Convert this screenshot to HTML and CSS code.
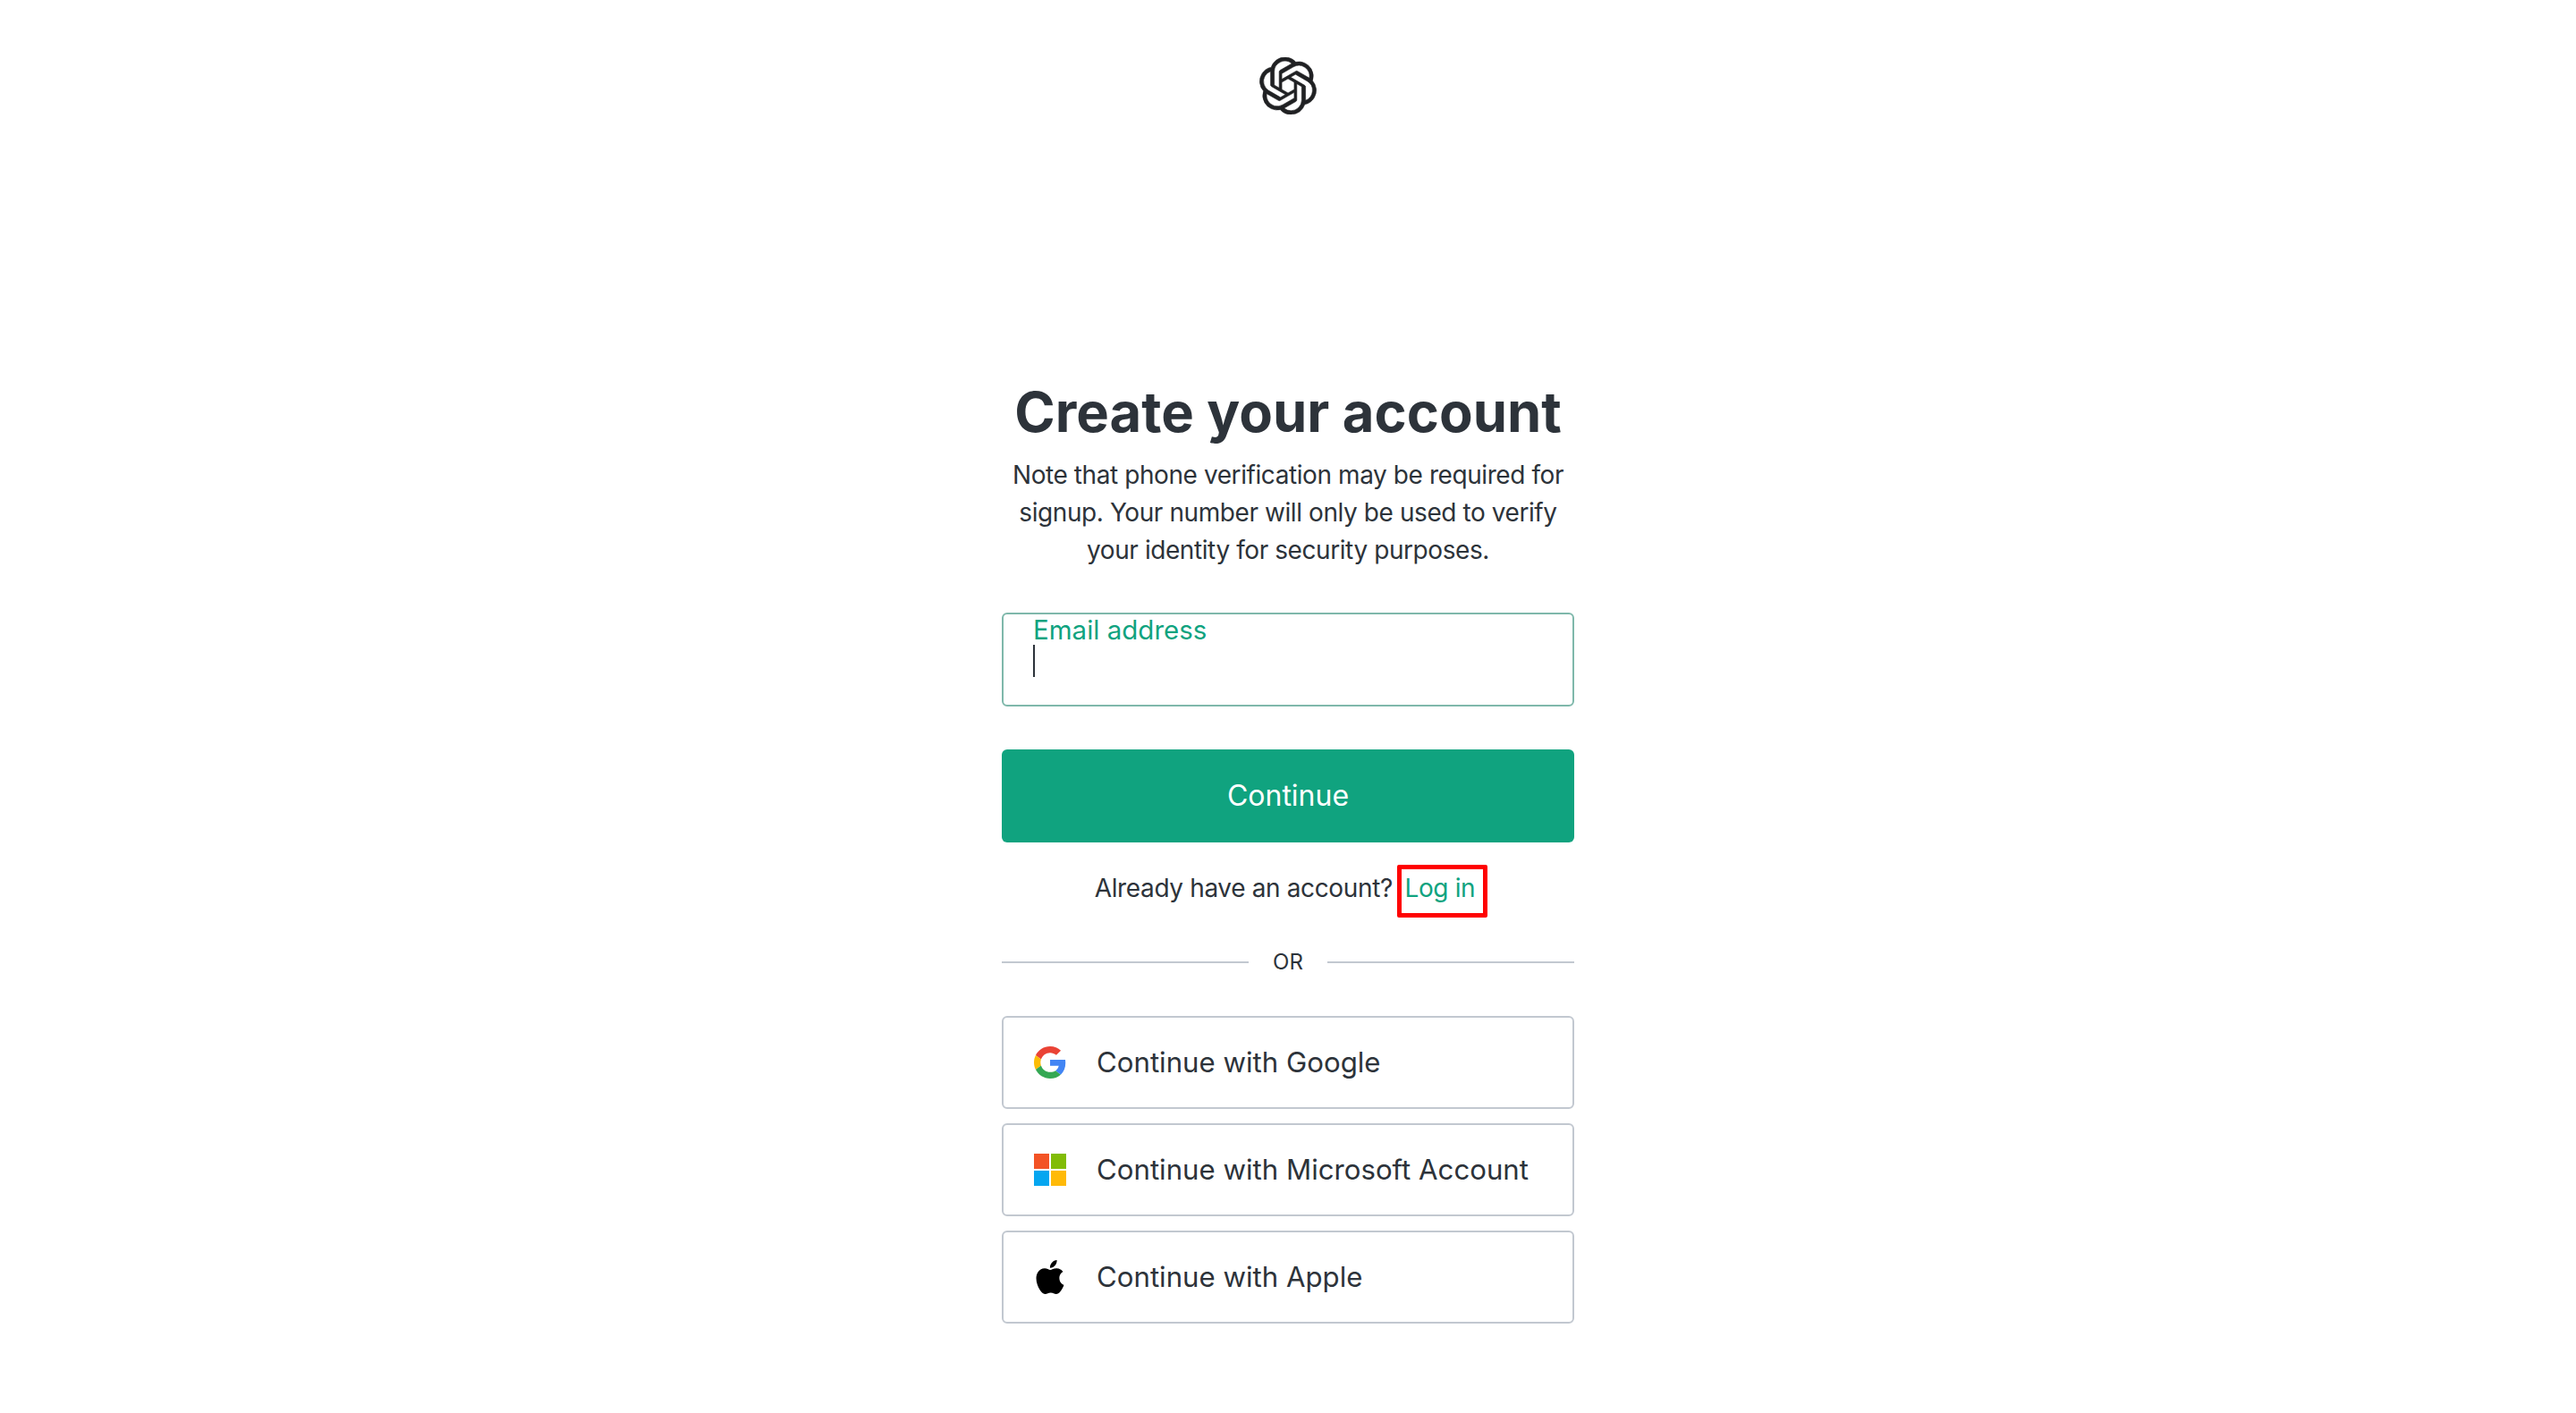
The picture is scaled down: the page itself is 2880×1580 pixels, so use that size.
FILE: index.html
```html
<!DOCTYPE html>
<html lang="en">
<head>
<meta charset="utf-8">
<title>Create your account</title>
<link rel="stylesheet" href="styles.css">
</head>
<body>
<header class="brand">
<svg class="brand-logo" viewBox="0 0 24 24" aria-hidden="true"><path d="M22.2819 9.8211a5.9847 5.9847 0 0 0-.5157-4.9108 6.0462 6.0462 0 0 0-6.5098-2.9A6.0651 6.0651 0 0 0 4.9807 4.1818a5.9847 5.9847 0 0 0-3.9977 2.9 6.0462 6.0462 0 0 0 .7427 7.0966 5.98 5.98 0 0 0 .511 4.9107 6.051 6.051 0 0 0 6.5146 2.9001A5.9847 5.9847 0 0 0 13.2599 24a6.0557 6.0557 0 0 0 5.7718-4.2058 5.9894 5.9894 0 0 0 3.9977-2.9001 6.0557 6.0557 0 0 0-.7475-7.0729zm-9.022 12.6081a4.4755 4.4755 0 0 1-2.8764-1.0408l.1419-.0804 4.7783-2.7582a.7948.7948 0 0 0 .3927-.6813v-6.7369l2.02 1.1686a.071.071 0 0 1 .038.052v5.5826a4.504 4.504 0 0 1-4.4945 4.4944zm-9.6607-4.1254a4.4708 4.4708 0 0 1-.5346-3.0137l.142.0852 4.783 2.7582a.7712.7712 0 0 0 .7806 0l5.8428-3.3685v2.3324a.0804.0804 0 0 1-.0332.0615L9.74 19.9502a4.4992 4.4992 0 0 1-6.1408-1.6464zM2.3408 7.8956a4.485 4.485 0 0 1 2.3655-1.9728V11.6a.7664.7664 0 0 0 .3879.6765l5.8144 3.3543-2.0201 1.1685a.0757.0757 0 0 1-.071 0l-4.8303-2.7865A4.504 4.504 0 0 1 2.3408 7.872zm16.5963 3.8558L13.1038 8.364 15.1192 7.2a.0757.0757 0 0 1 .071 0l4.8303 2.7913a4.4944 4.4944 0 0 1-.6765 8.1042v-5.6772a.79.79 0 0 0-.407-.667zm2.0107-3.0231l-.142-.0852-4.7735-2.7818a.7759.7759 0 0 0-.7854 0L9.409 9.2297V6.8974a.0662.0662 0 0 1 .0284-.0615l4.8303-2.7866a4.4992 4.4992 0 0 1 6.6802 4.66zM8.3065 12.863l-2.02-1.1638a.0804.0804 0 0 1-.038-.0567V6.0742a4.4992 4.4992 0 0 1 7.3757-3.4537l-.142.0805L8.704 5.459a.7948.7948 0 0 0-.3927.6813zm1.0976-2.3654l2.602-1.4998 2.6069 1.4998v2.9994l-2.5974 1.4997-2.6067-1.4997Z"/></svg>
</header>
<main class="panel">
<h1 class="title">Create your account</h1>
<p class="note">Note that phone verification may be required for signup. Your number will only be used to verify your identity for security purposes.</p>
<div class="field">
<label class="field-label">Email address</label>
<span class="caret"></span>
</div>
<button class="primary" type="button">Continue</button>
<p class="login-row">Already have an account? <a class="login-link" href="#">Log in</a></p>
<div class="divider"><span class="divider-text">OR</span></div>
<div class="socials">
<button class="social" type="button">
<svg class="social-icon" viewBox="0 0 48 48" aria-hidden="true"><path fill="#EA4335" d="M24 9.5c3.54 0 6.71 1.22 9.21 3.6l6.85-6.85C35.9 2.38 30.47 0 24 0 14.62 0 6.51 5.38 2.56 13.22l7.98 6.19C12.43 13.72 17.74 9.5 24 9.5z"/><path fill="#4285F4" d="M46.98 24.55c0-1.57-.15-3.09-.38-4.55H24v9.02h12.94c-.58 2.96-2.26 5.48-4.78 7.18l7.73 6c4.51-4.18 7.09-10.36 7.09-17.65z"/><path fill="#FBBC05" d="M10.53 28.59c-.48-1.45-.76-2.99-.76-4.59s.27-3.14.76-4.59l-7.98-6.19C.92 16.46 0 20.12 0 24c0 3.88.92 7.54 2.56 10.78l7.97-6.19z"/><path fill="#34A853" d="M24 48c6.48 0 11.93-2.13 15.89-5.81l-7.73-6c-2.15 1.45-4.92 2.3-8.16 2.3-6.26 0-11.57-4.22-13.47-9.91l-7.98 6.19C6.51 42.62 14.62 48 24 48z"/></svg>
<span>Continue with Google</span>
</button>
<button class="social" type="button">
<svg class="social-icon" viewBox="0 0 36 36" aria-hidden="true"><rect width="17" height="17" fill="#F35325"/><rect x="19" width="17" height="17" fill="#81BC06"/><rect y="19" width="17" height="17" fill="#05A6F0"/><rect x="19" y="19" width="17" height="17" fill="#FFBA08"/></svg>
<span>Continue with Microsoft Account</span>
</button>
<button class="social" type="button">
<svg class="social-icon social-icon-apple" viewBox="0 0 24 24" aria-hidden="true"><path fill="#000" d="M12.152 6.896c-.948 0-2.415-1.078-3.96-1.04-2.04.027-3.91 1.183-4.961 3.014-2.117 3.675-.546 9.103 1.519 12.09 1.013 1.454 2.208 3.09 3.792 3.039 1.52-.065 2.09-.987 3.935-.987 1.831 0 2.35.987 3.96.948 1.637-.026 2.676-1.48 3.676-2.948 1.156-1.688 1.636-3.325 1.662-3.415-.039-.013-3.182-1.221-3.22-4.857-.026-3.04 2.48-4.494 2.597-4.559-1.429-2.09-3.623-2.324-4.39-2.376-2-.156-3.675 1.09-4.61 1.09zM15.53 3.83c.843-1.012 1.4-2.427 1.245-3.83-1.207.052-2.662.805-3.532 1.818-.78.896-1.454 2.338-1.273 3.714 1.338.104 2.715-.688 3.559-1.701"/></svg>
<span>Continue with Apple</span>
</button>
</div>
</main>
</body>
</html>
```
FILE: styles.css
```css
* { box-sizing: border-box; }
html, body { margin: 0; height: 100%; }
body {
  background: #fff;
  color: #2d333a;
  font-family: Inter, "Liberation Sans", sans-serif;
  display: flex;
  flex-direction: column;
  align-items: center;
}
.brand { padding-top: 64px; height: 421px; }
.brand-logo { display: block; width: 64px; height: 64px; fill: #202123; stroke: #202123; stroke-width: 0.22; }
.panel { width: 640px; display: flex; flex-direction: column; align-items: stretch; }
.title {
  margin: 0;
  font-size: 61.5px;
  font-weight: 700;
  line-height: 80px;
  text-align: center;
  white-space: nowrap;
}
.note {
  margin: 9px -10px 0;
  font-size: 28px;
  letter-spacing: -0.42px;
  line-height: 42px;
  text-align: center;
}
.field {
  margin-top: 49px;
  height: 105px;
  border: 2px solid #7fb8ab;
  border-radius: 6px;
  padding: 0 0 0 33px;
  display: flex;
  flex-direction: column;
  align-items: flex-start;
}
.field-label { font-size: 29.5px; line-height: 34px; color: #10a37f; }
.caret { display: block; width: 2px; height: 36px; background: #2d333a; }
.primary {
  margin-top: 48px;
  height: 104px;
  padding-bottom: 2px;
  border: 0;
  border-radius: 6px;
  background: #10a37f;
  color: #fff;
  font: 400 32px Inter, "Liberation Sans", sans-serif;
}
.login-row {
  margin: 30px 0 0;
  padding-right: 7px;
  font-size: 28px;
  letter-spacing: -0.36px;
  line-height: 42px;
  text-align: center;
}
.login-link { position: relative; color: #10a37f; text-decoration: none; margin-left: 6px; }
.login-link::after {
  content: "";
  position: absolute;
  left: -8px;
  right: -14px;
  top: -9px;
  bottom: -16px;
  border: 5px solid #f00;
  border-radius: 2px;
}
.divider {
  margin-top: 44px;
  display: flex;
  align-items: center;
  gap: 27px;
  font-size: 24px;
  line-height: 36px;
}
.divider::before, .divider::after { content: ""; flex: 1; height: 2px; background: #c2c8d0; }
.socials { margin-top: 42px; display: flex; flex-direction: column; gap: 16px; }
.social {
  height: 104px;
  border: 2px solid #c2c8d0;
  border-radius: 6px;
  background: #fff;
  color: #2d333a;
  font: 400 31.2px Inter, "Liberation Sans", sans-serif;
  display: flex;
  align-items: center;
  gap: 34px;
  padding: 0 0 0 34px;
}
.social-icon { width: 36px; height: 36px; flex: none; }
.social-icon-apple { width: 38px; height: 38px; margin: 0 -1px; }
```
